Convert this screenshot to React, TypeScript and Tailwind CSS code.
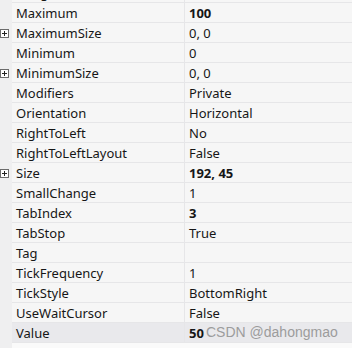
import React from "react";

type Row = { name: string; value: string; bold?: boolean; plus?: boolean; selected?: boolean };

const rows: Row[] = [
  { name: "Margin", value: "", plus: true },
  { name: "Maximum", value: "100", bold: true },
  { name: "MaximumSize", value: "0, 0", plus: true },
  { name: "Minimum", value: "0" },
  { name: "MinimumSize", value: "0, 0", plus: true },
  { name: "Modifiers", value: "Private" },
  { name: "Orientation", value: "Horizontal" },
  { name: "RightToLeft", value: "No" },
  { name: "RightToLeftLayout", value: "False" },
  { name: "Size", value: "192, 45", bold: true, plus: true },
  { name: "SmallChange", value: "1" },
  { name: "TabIndex", value: "3", bold: true },
  { name: "TabStop", value: "True" },
  { name: "Tag", value: "" },
  { name: "TickFrequency", value: "1" },
  { name: "TickStyle", value: "BottomRight" },
  { name: "UseWaitCursor", value: "False" },
  { name: "Value", value: "50", bold: true, selected: true },
];

function PlusBox() {
  return (
    <svg width="9" height="9" viewBox="0 0 9 9" className="block">
      <rect x="0.5" y="0.5" width="8" height="8" fill="#ffffff" stroke="#6b6b6b" />
      <path d="M2 4.5H7M4.5 2V7" stroke="#222" strokeWidth="1" />
    </svg>
  );
}

export default function App() {
  return (
    <div
      className="relative w-[352px] h-[348px] overflow-hidden bg-[#efeff0] text-[13px] text-[#161616]"
      style={{ fontFamily: '"Noto Sans", "Open Sans", sans-serif' }}
    >
      <div className="-mt-[17px] flex flex-col">
        {rows.map((r) => (
          <div key={r.name} className="flex h-[20px]">
            <div className="w-[12px] flex items-center justify-start pt-[1px]">
              {r.plus && <PlusBox />}
            </div>
            <div
              className={`w-[173px] h-[20px] border-b border-r border-[#e6e6e8] pl-[4px] pt-[2px] flex items-center leading-none ${
                r.selected ? "bg-[#e9e9ec]" : "bg-[#f6f6f6]"
              }`}
            >
              {r.name}
            </div>
            <div
              className={`flex-1 h-[20px] border-b border-[#e6e6e8] pl-[4px] pt-[2px] flex items-center leading-none ${
                r.selected ? "bg-[#e9e9ec]" : "bg-[#f6f6f6]"
              } ${r.bold ? "font-bold" : ""}`}
            >
              {r.value}
            </div>
          </div>
        ))}
        <div className="flex flex-1">
          <div className="w-[12px]" />
          <div className="flex-1 h-[10px] bg-[#fafafa]" />
        </div>
      </div>
      <div
        className="absolute left-[206px] top-[323px] text-[14px] leading-[18px] text-[#9c9c9c]"
        style={{ fontFamily: '"Liberation Sans", Arial, sans-serif' }}
      >
        CSDN @dahongmao
      </div>
    </div>
  );
}
